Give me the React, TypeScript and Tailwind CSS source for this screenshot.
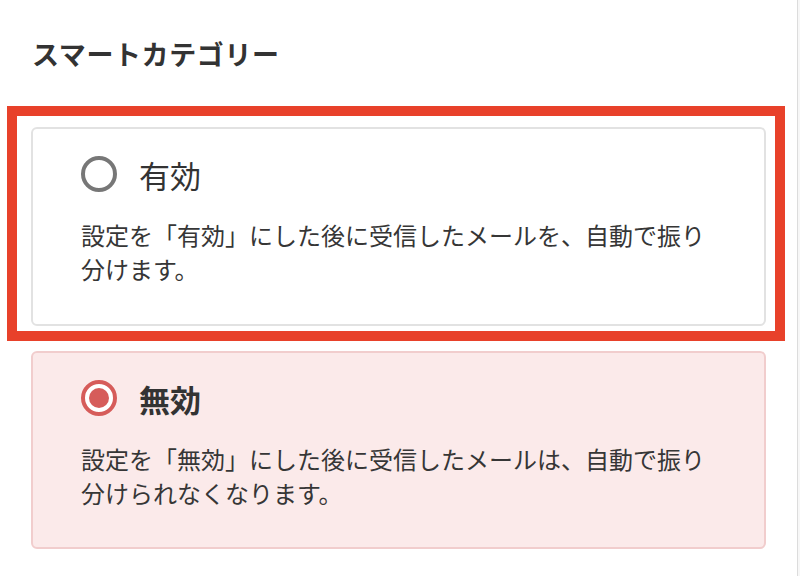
export default function App() {
  return (
    <div
      className="relative flex w-[800px] h-[576px] overflow-hidden bg-white text-[#333]"
      style={{ fontFamily: '"Noto Sans CJK JP", "Noto Sans", sans-serif' }}
    >
      <div className="flex-1">
        {/* Heading */}
        <h2 className="pl-[32px] pt-[40px] text-[27px] font-bold leading-[27px] tracking-[0.6px]">
          スマートカテゴリー
        </h2>

        <div className="ml-[31px] mt-[60px] w-[735px] flex flex-col gap-[25px]">
          {/* Enabled option */}
          <div className="h-[199px] rounded-[6px] border-2 border-[#e2e2e2] bg-white px-[48px] pt-[27px]">
            <div className="flex items-center gap-[22px] h-[36px]">
              <span className="w-[36px] h-[36px] rounded-full border-[4px] border-[#777] flex-shrink-0" />
              <span className="text-[31px] leading-none">有効</span>
            </div>
            <p className="mt-[26px] text-[24px] leading-[34px] text-[#363636]">
              設定を「有効」にした後に受信したメールを、自動で振り分けます。
            </p>
          </div>

          {/* Disabled option (selected) */}
          <div className="h-[198px] rounded-[6px] border-2 border-[#f1cdcd] bg-[#fbeaea] px-[48px] pt-[27px]">
            <div className="flex items-center gap-[22px] h-[36px]">
              <span className="w-[36px] h-[36px] rounded-full border-[4px] border-[#d65c5a] bg-white flex items-center justify-center flex-shrink-0">
                <span className="w-[20px] h-[20px] rounded-full bg-[#d65c5a]" />
              </span>
              <span className="text-[31px] font-bold leading-none">無効</span>
            </div>
            <p className="mt-[26px] text-[24px] leading-[34px] text-[#363636]">
              設定を「無効」にした後に受信したメールは、自動で振り分けられなくなります。
            </p>
          </div>
        </div>
      </div>

      {/* Right edge of the pane */}
      <div className="w-[3px] border-l border-[#dcdcdc] bg-[#f7f7f7]" />

      {/* Highlight annotation */}
      <div className="absolute left-[7px] top-[106px] w-[778px] h-[235px] border-[10px] border-[#e8412a] pointer-events-none" />
    </div>
  );
}
